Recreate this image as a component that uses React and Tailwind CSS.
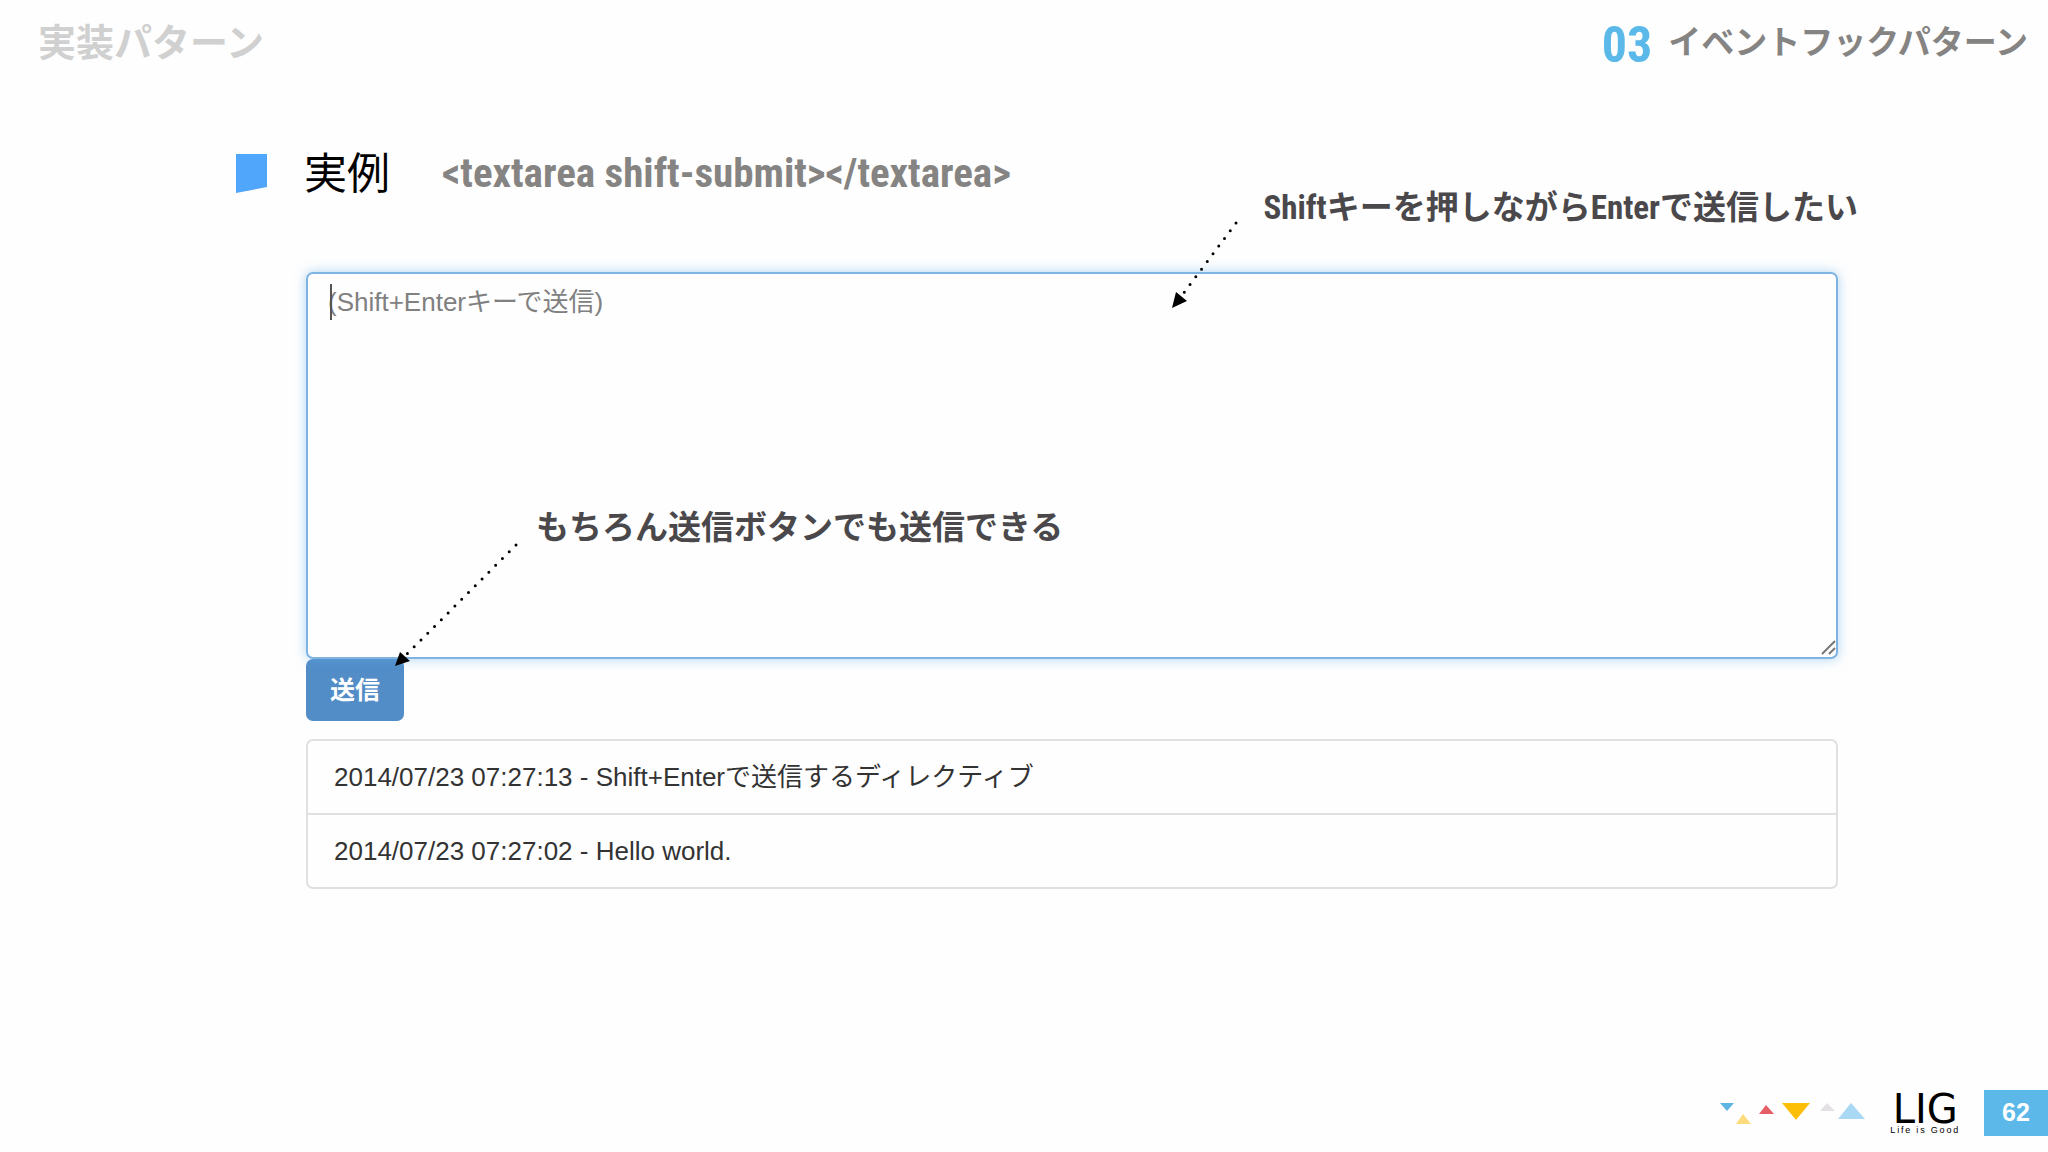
import { useState } from 'react';

const initialMessages = [
  { id: 2, time: '2014/07/23 07:27:13', body: 'Shift+Enterで送信するディレクティブ' },
  { id: 1, time: '2014/07/23 07:27:02', body: 'Hello world.' },
];

const Header = () => (
  <header className="flex items-center justify-between h-[86px] pl-[38px] pr-5 font-bold">
    <p className="text-[38px] text-[#d0d0d0]">実装パターン</p>
    <div className="flex items-center gap-4">
      <span className="pt-1 font-['Liberation_Sans_Narrow','Roboto_Condensed',sans-serif] text-[50px] text-[#5bb9e9]">03</span>
      <span className="text-[33px] text-[#858483]">イベントフックパターン</span>
    </div>
  </header>
);

const Heading = () => (
  <div className="flex items-center h-[60px] mt-[58px] pl-[236px]">
    <svg className="w-8 h-10" viewBox="0 0 32 40" aria-hidden="true">
      <path d="M0 0H31V33L0 39Z" fill="#4fa6fa" />
    </svg>
    <h1 className="ml-9 text-[43px] font-normal text-black">実例</h1>
    <code className="ml-[52px] font-['Liberation_Sans_Narrow','Roboto_Condensed',sans-serif] text-[41px] font-bold text-[#858483]">
      {'<textarea shift-submit></textarea>'}
    </code>
  </div>
);

const SubmitNote = () => (
  <div className="absolute -top-[64px] -right-[20px] flex pointer-events-none">
    <svg className="w-[72px] h-[92px] mt-[12px] mr-5" viewBox="0 0 72 92" aria-hidden="true">
      <line x1="65" y1="3" x2="9" y2="78" stroke="#000" strokeWidth="3" strokeLinecap="round" strokeDasharray="0 9.6" />
      <path d="M1 88L5 72L16 81Z" />
    </svg>
    <p className="-mt-[24px] font-['Liberation_Sans_Narrow','Roboto_Condensed','Noto_Sans_CJK_JP',sans-serif] text-[33px] leading-[48px] font-bold text-[#4a484b]">
      Shiftキーを押しながらEnterで送信したい
    </p>
  </div>
);

const ButtonNote = () => (
  <div className="absolute top-[232px] left-[88px] flex pointer-events-none">
    <svg className="w-[126px] h-[126px] mt-[38px]" viewBox="0 0 126 126" aria-hidden="true">
      <line x1="122" y1="3" x2="10" y2="115" stroke="#000" strokeWidth="3" strokeLinecap="round" strokeDasharray="0 9.6" />
      <path d="M1 124L6 110L16 119Z" />
    </svg>
    <p className="ml-4 text-[33px] leading-[48px] font-bold text-[#4a484b]">もちろん送信ボタンでも送信できる</p>
  </div>
);

const ShiftSubmit = () => {
  const [text, setText] = useState('');
  const [messages, setMessages] = useState(initialMessages);

  const submit = () => {
    if (!text) return;
    const time = new Date().toLocaleString('ja-JP');
    setMessages([{ id: messages.length + 1, time, body: text }, ...messages]);
    setText('');
  };

  const onKeyDown = (e) => {
    if (e.key === 'Enter' && e.shiftKey) {
      e.preventDefault();
      submit();
    }
  };

  return (
    <main className="mt-[68px] ml-[306px] mr-[210px] text-[26px] leading-9 text-[#333]">
      <div className="relative">
        <textarea
          aria-label="メッセージ"
          placeholder="(Shift+Enterキーで送信)"
          value={text}
          onChange={e => setText(e.target.value)}
          onKeyDown={onKeyDown}
          className="block w-full h-[387px] px-5 py-[10px] resize-none outline-none rounded-[7px] border-2 border-[#7fb4e2] bg-[#fefefe] placeholder:text-[#808080] shadow-[0_0_12px_#66afe988]"
        />
        <span className="absolute top-3 left-6 w-[2px] h-9 bg-[#555]" />
        <svg className="absolute right-[2px] bottom-1 w-4 h-4" viewBox="0 0 16 16" stroke="#777" strokeWidth="2" aria-hidden="true">
          <path d="M2 15L15 2M9 15L15 9" />
        </svg>
        <SubmitNote />
        <ButtonNote />
      </div>
      <button onClick={submit} className="block px-6 py-[13px] rounded-[7px] bg-[#528dc8] text-[25px] font-bold text-white">
        送信
      </button>
      <ul className="mt-[18px] rounded-[7px] border-2 border-[#e0e0e3] divide-y-2 divide-[#e0e0e3]">
        {messages.map(m => (
          <li key={m.id} className="px-[26px] py-[18px]">{m.time} - {m.body}</li>
        ))}
      </ul>
    </main>
  );
};

const Footer = () => (
  <footer className="flex items-center justify-end mt-auto mb-4 h-[46px]">
    <svg className="w-[146px] h-6" viewBox="0 0 146 24" aria-hidden="true">
      <path d="M0 2H14L7 10Z" fill="#5cb5e0" />
      <path d="M16 23H31L23 13Z" fill="#fddb7c" />
      <path d="M39 13H54L46 4Z" fill="#e45f66" />
      <path d="M62 2H90L76 19Z" fill="#fdbf05" />
      <path d="M100 10H115L107 2Z" fill="#e3e1e5" />
      <path d="M118 18H145L131 2Z" fill="#a8d8f4" />
    </svg>
    <div className="flex flex-col items-center ml-6 mr-6 text-black">
      <span className="font-['DejaVu_Sans',sans-serif] text-[40px] leading-[34px]">LIG</span>
      <span className="font-['Liberation_Sans',sans-serif] text-[9px] leading-[9px] tracking-[0.2em]">Life is Good</span>
    </div>
    <span className="flex items-center justify-center w-16 h-full bg-[#5bb8e9] font-['Liberation_Sans',sans-serif] text-[25px] font-bold text-white">62</span>
  </footer>
);

export default function App() {
  return (
    <div className="flex flex-col min-h-screen bg-[#fefefe] font-['Liberation_Sans','Noto_Sans_CJK_JP',sans-serif]" lang="ja">
      <Header />
      <Heading />
      <ShiftSubmit />
      <Footer />
    </div>
  );
}
